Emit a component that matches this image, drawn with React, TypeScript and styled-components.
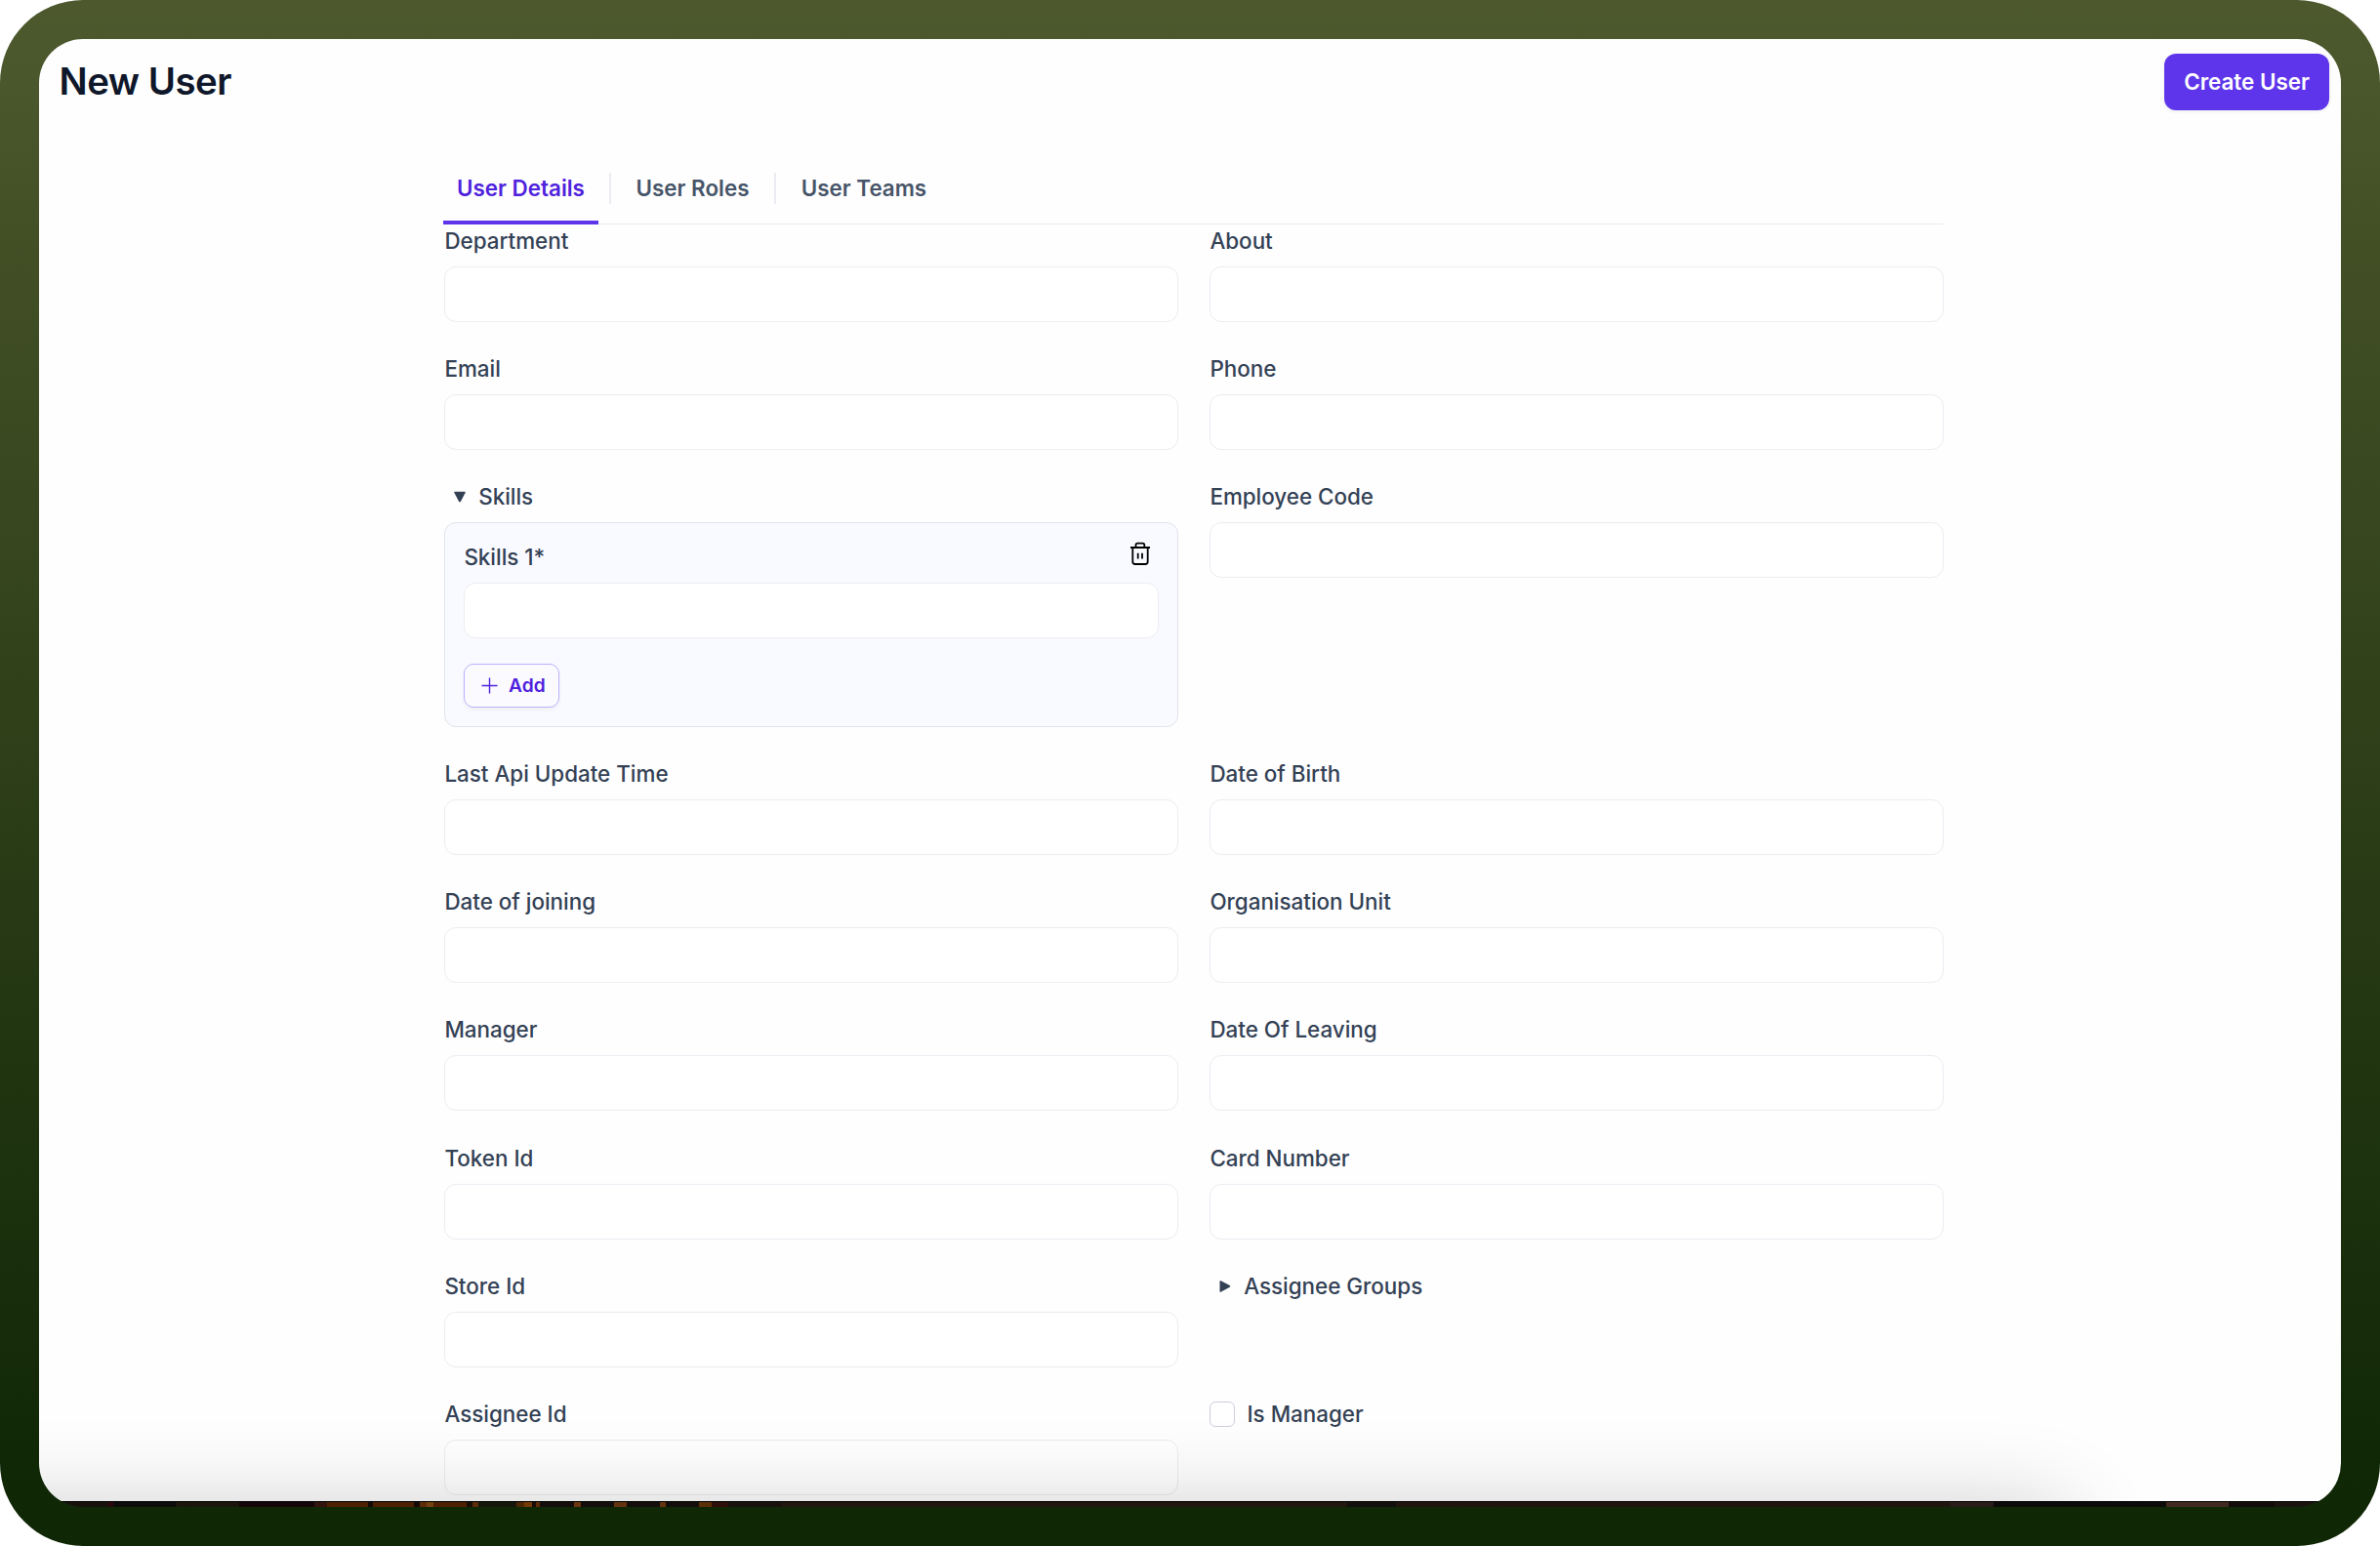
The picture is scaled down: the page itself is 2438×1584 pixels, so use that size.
import React from "react";
import styled, { createGlobalStyle } from "styled-components";

const Global = createGlobalStyle`
  *, *::before, *::after { box-sizing: border-box; }
  body { margin: 0; background: #ffffff; }
  button, input { font: inherit; }
`;

const Frame = styled.div`
  width: 2438px;
  height: 1584px;
  padding: 40px;
  border-radius: 85px;
  overflow: hidden;
  background: linear-gradient(180deg, #4d582d 0%, #4a562b 6%, #435026 15%, #112807 94%, #102706 100%);
  font-family: Inter, "Liberation Sans", sans-serif;
  color: #334155;
`;

const Screen = styled.div`
  height: 1504px;
  border-radius: 45px;
  overflow: hidden;
  display: flex;
  flex-direction: column;
`;

const Page = styled.main`
  position: relative;
  height: 1498px;
  flex: none;
  overflow: hidden;
  background: #fefefe;
`;

const Header = styled.header`
  display: flex;
  justify-content: space-between;
  align-items: flex-start;
  padding: 15px 12px 0 20.6px;
  height: 113px;
`;

const Title = styled.h1`
  margin: 2px 0 0;
  font-size: 38.4px;
  line-height: 52px;
  font-weight: 600;
  letter-spacing: -0.5px;
  color: #0f172a;
`;

const PrimaryButton = styled.button`
  width: 169px;
  height: 58px;
  padding: 0 0 1px;
  border: 0;
  border-radius: 12px;
  background: #5e35eb;
  color: #ffffff;
  font-size: 22.4px;
  font-weight: 600;
  box-shadow: 0 1px 4px rgba(15, 23, 42, 0.08);
`;

const Content = styled.section`
  width: 1537px;
  margin-left: 414px;
`;

const Tabs = styled.nav`
  display: flex;
  height: 77px;
  border-bottom: 1px solid #ebebf2;
`;

const Tab = styled.button<{ $active?: boolean; $width: number }>`
  width: ${(p) => p.$width}px;
  height: 77px;
  padding: 6px 0 0;
  border: 0;
  border-bottom: 4px solid ${(p) => (p.$active ? "#5e35eb" : "transparent")};
  background: none;
  color: ${(p) => (p.$active ? "#4f22dd" : "#475569")};
  font-size: 22.4px;
  font-weight: 600;
`;

const Divider = styled.span`
  width: 2px;
  height: 32px;
  margin: 24px 11px 0;
  background: #ecebf3;
`;

const Form = styled.form`
  display: grid;
  grid-template-columns: 752px 752px;
  column-gap: 32px;
  row-gap: 30.1px;
  margin: -1px 0 0;
  padding: 0 0 0 1px;
`;

const Field = styled.div`
  min-height: 101px;
`;

const Label = styled.label`
  display: flex;
  align-items: center;
  height: 36px;
  padding-left: 0.4px;
  font-size: 22.4px;
  line-height: 36px;
  font-weight: 500;
`;

const Input = styled.input`
  display: block;
  width: 100%;
  height: 57px;
  margin-top: 8px;
  border: 1px solid #ececf3;
  border-radius: 12px;
  background: #ffffff;
  outline: none;
`;

const Summary = styled(Label)`
  padding-left: 10.2px;
  gap: 13px;
`;

const Caret = styled.svg`
  width: 12px;
  height: 12px;
  flex: none;
`;

const Group = styled.div`
  height: 210px;
  margin-top: 8px;
  padding: 17px 19px 0;
  border: 1px solid #e1e3ec;
  border-radius: 12px;
  background: #f9faff;
`;

const GroupHead = styled.div`
  display: flex;
  justify-content: space-between;
  height: 36px;
`;

const TrashIcon = styled.svg`
  width: 24px;
  height: 24px;
  margin: 2px 7px 0 0;
`;

const AddButton = styled.button`
  display: flex;
  align-items: center;
  width: 98px;
  height: 45px;
  margin-top: 26px;
  padding: 0 0 1px 17px;
  gap: 11px;
  border: 1px solid #b9b2fb;
  border-radius: 10px;
  background: #fbfbff;
  color: #4f22dd;
  font-size: 19.2px;
  font-weight: 600;
  box-shadow: 0 2px 4px rgba(15, 23, 42, 0.05);
`;

const CheckRow = styled(Label)`
  gap: 12.5px;
  padding-left: 0;
`;

const Checkbox = styled.span`
  width: 26px;
  height: 26px;
  flex: none;
  border: 1px solid #cdd0de;
  border-radius: 6px;
  background: #ffffff;
`;

const BottomShade = styled.div`
  position: absolute;
  left: -160px;
  top: 1515px;
  width: 2227px;
  height: 100px;
  box-shadow: 0 0 92px 10px rgba(0, 0, 0, 0.2);
`;

const Backdrop = styled.div`
  height: 6px;
  flex: none;
  border-top: 1px solid #000000;
  background: linear-gradient(
    90deg,
    #17110c 0 70px, #2a090d 70px 76px, #0e0c0a 76px 140px, #1a160c 140px 205px, #160508 205px 282px,
    #33140c 282px 295px, #4d2003 295px 337px, #150a06 337px 342px, #4d2003 342px 384px, #150a06 384px 390px,
    #5b2c07 390px 397px, #75400f 397px 404px, #4d2003 404px 438px, #1a0d05 438px 444px, #5b2c07 444px 450px, #17160a 450px 489px,
    #4d2606 489px 497px, #753a06 497px 505px, #1a0c07 505px 509px, #5b2c07 509px 513px, #130e0b 513px 548px, #6b350d 548px 555px,
    #130e0b 555px 589px, #63330f 589px 602px, #130e0b 602px 636px, #63330f 636px 642px, #130e0b 642px 676px,
    #5b2f08 676px 689px, #2d1009 689px 706px, #19120c 706px 760px, #22170f 760px 1340px, #120f0c 1340px 1390px,
    #21160f 1390px 1958px, #2a1d19 1958px 2002px, #0c0b09 2002px 2179px, #41291f 2179px 2243px, #130c0a 2243px 2290px, #1a140f 2290px
  );
`;

const TextField = ({ label }: { label: string }) => (
  <Field>
    <Label>{label}</Label>
    <Input aria-label={label} />
  </Field>
);

export default function App() {
  return (
    <Frame>
      <Global />
      <Screen>
        <Page>
          <Header>
            <Title>New User</Title>
            <PrimaryButton>Create User</PrimaryButton>
          </Header>
          <Content>
            <Tabs>
              <Tab $active $width={159}>User Details</Tab>
              <Divider />
              <Tab $width={145}>User Roles</Tab>
              <Divider />
              <Tab $width={158}>User Teams</Tab>
            </Tabs>
            <Form>
              <TextField label="Department" />
              <TextField label="About" />
              <TextField label="Email" />
              <TextField label="Phone" />
              <Field>
                <Summary>
                  <Caret viewBox="0 0 12 12">
                    <path d="M.9.700h10.200q.9.100.6 1L7 10.700q-1 1.200-2 0L.3 1.700Q0 .8.900.7Z" fill="#334155" />
                  </Caret>
                  Skills
                </Summary>
                <Group>
                  <GroupHead>
                    <Label>Skills 1*</Label>
                    <TrashIcon viewBox="0 0 24 24" fill="none" stroke="#000" strokeWidth="1.8">
                      <path d="M2 6H22M4.300 6V20.500Q4.300 23 6.800 23H17.200Q19.700 23 19.700 20.500V6M7.500 6V3.500Q7.500 1.700 9.300 1.700H14.500Q16.300 1.700 16.300 3.500V6M9.700 11.700V17.500M14 11.700V17.500" />
                    </TrashIcon>
                  </GroupHead>
                  <Input aria-label="Skills 1" />
                  <AddButton type="button">
                    <svg width="17" height="17" viewBox="0 0 17 17" stroke="#4f22dd" strokeWidth="1.400">
                      <path d="M8.500.5v16M.5 8.500h16" />
                    </svg>
                    Add
                  </AddButton>
                </Group>
              </Field>
              <TextField label="Employee Code" />
              <TextField label="Last Api Update Time" />
              <TextField label="Date of Birth" />
              <TextField label="Date of joining" />
              <TextField label="Organisation Unit" />
              <TextField label="Manager" />
              <TextField label="Date Of Leaving" />
              <TextField label="Token Id" />
              <TextField label="Card Number" />
              <TextField label="Store Id" />
              <Field>
                <Summary>
                  <Caret viewBox="0 0 12 12">
                    <path d="M.5.700Q.7-.1 1.600.3L10.700 5q1.200.8 0 1.700L1.600 11.700Q.7 12.100.5 11.200Z" fill="#334155" />
                  </Caret>
                  Assignee Groups
                </Summary>
              </Field>
              <TextField label="Assignee Id" />
              <Field>
                <CheckRow>
                  <Checkbox />
                  Is Manager
                </CheckRow>
              </Field>
            </Form>
          </Content>
          <BottomShade />
        </Page>
        <Backdrop />
      </Screen>
    </Frame>
  );
}
